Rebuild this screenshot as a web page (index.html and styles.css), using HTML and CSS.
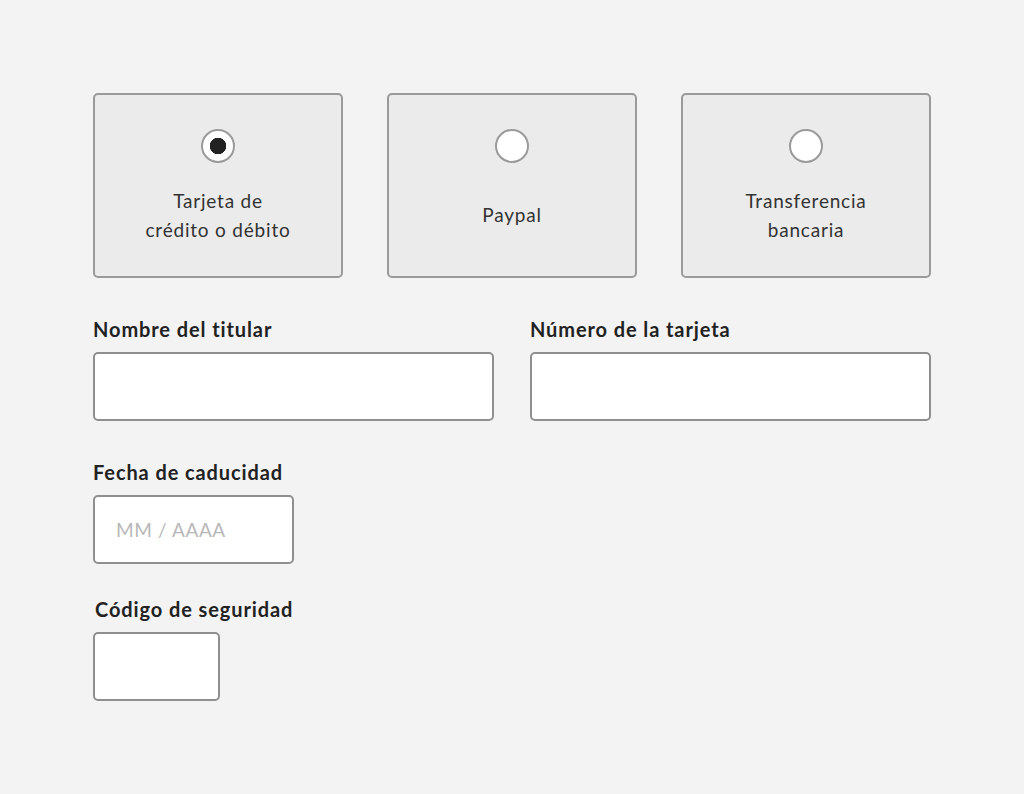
FILE: index.html
```html
<!DOCTYPE html>
<html lang="es">
<head>
    <meta charset="UTF-8">
    <meta name="viewport" content="width=device-width, initial-scale=1.0">
    <title>Método de pago</title>
    <link rel="stylesheet" href="styles.css">
</head>
<body>
    <div class="container">
        <div class="methods">
            <label class="method">
                <input type="radio" name="method" value="card" checked>
                <span class="method-text">Tarjeta de<br>crédito o débito</span>
            </label>
            <label class="method">
                <input type="radio" name="method" value="paypal">
                <span class="method-text">Paypal</span>
            </label>
            <label class="method">
                <input type="radio" name="method" value="transfer">
                <span class="method-text">Transferencia<br>bancaria</span>
            </label>
        </div>

        <form class="card-form">
            <div class="row">
                <div class="field">
                    <label for="holder">Nombre del titular</label>
                    <input type="text" id="holder" name="holder">
                </div>
                <div class="field">
                    <label for="number">Número de la tarjeta</label>
                    <input type="text" id="number" name="number">
                </div>
            </div>

            <div class="field field-date">
                <label for="expiry">Fecha de caducidad</label>
                <input type="text" id="expiry" name="expiry" placeholder="MM / AAAA">
            </div>

            <div class="field field-cvv">
                <label for="cvv" class="label-cvv">Código de seguridad</label>
                <input type="text" id="cvv" name="cvv">
            </div>
        </form>
    </div>
</body>
</html>
```

FILE: styles.css
```css
body {
    font-family: Lato, "Open Sans", sans-serif;
    margin: 0;
    padding: 0;
    background-color: #f3f3f3;
    color: #2b2b2b;
}

.container {
    width: 838px;
    margin: 0 auto;
    padding-top: 93px;
}

.methods {
    display: flex;
    gap: 44px;
}

.method {
    flex: 1;
    height: 185px;
    box-sizing: border-box;
    border: 2px solid #9a9a9a;
    border-radius: 5px;
    background-color: #ebebeb;
    display: flex;
    flex-direction: column;
    align-items: center;
    padding-top: 34px;
    cursor: pointer;
}

.method input {
    appearance: none;
    -webkit-appearance: none;
    margin: 0;
    width: 34px;
    height: 34px;
    flex-shrink: 0;
    border: 2px solid #9a9a9a;
    border-radius: 50%;
    background-color: #fff;
    cursor: pointer;
}

.method input:checked {
    background: radial-gradient(circle, #222 0 8px, #fff 8.5px);
}

.method-text {
    flex: 1;
    display: flex;
    align-items: center;
    text-align: center;
    font-size: 19px;
    line-height: 29px;
    color: #333;
    letter-spacing: 0.8px;
    padding-bottom: 10px;
}

.card-form {
    display: flex;
    flex-direction: column;
    margin-top: 39px;
}

.row {
    display: flex;
    gap: 36px;
}

.row .field {
    flex: 1;
}

.field {
    display: flex;
    flex-direction: column;
}

.field label {
    font-size: 20px;
    line-height: 24px;
    font-weight: bold;
    color: #222;
    letter-spacing: 0.9px;
    margin-bottom: 11px;
}

.field .label-cvv {
    padding-left: 2px;
}

.field input {
    box-sizing: border-box;
    height: 69px;
    border: 2px solid #8f8f8f;
    border-radius: 5px;
    background-color: #fff;
    padding: 0 21px;
    font-family: inherit;
    font-size: 19px;
    letter-spacing: 0.6px;
    color: #333;
    outline: none;
}

.field input::placeholder {
    color: #b8b8b8;
}

.field-date {
    margin-top: 39px;
}

.field-date input {
    width: 201px;
}

.field-cvv {
    margin-top: 33px;
}

.field-cvv input {
    width: 127px;
}
```
